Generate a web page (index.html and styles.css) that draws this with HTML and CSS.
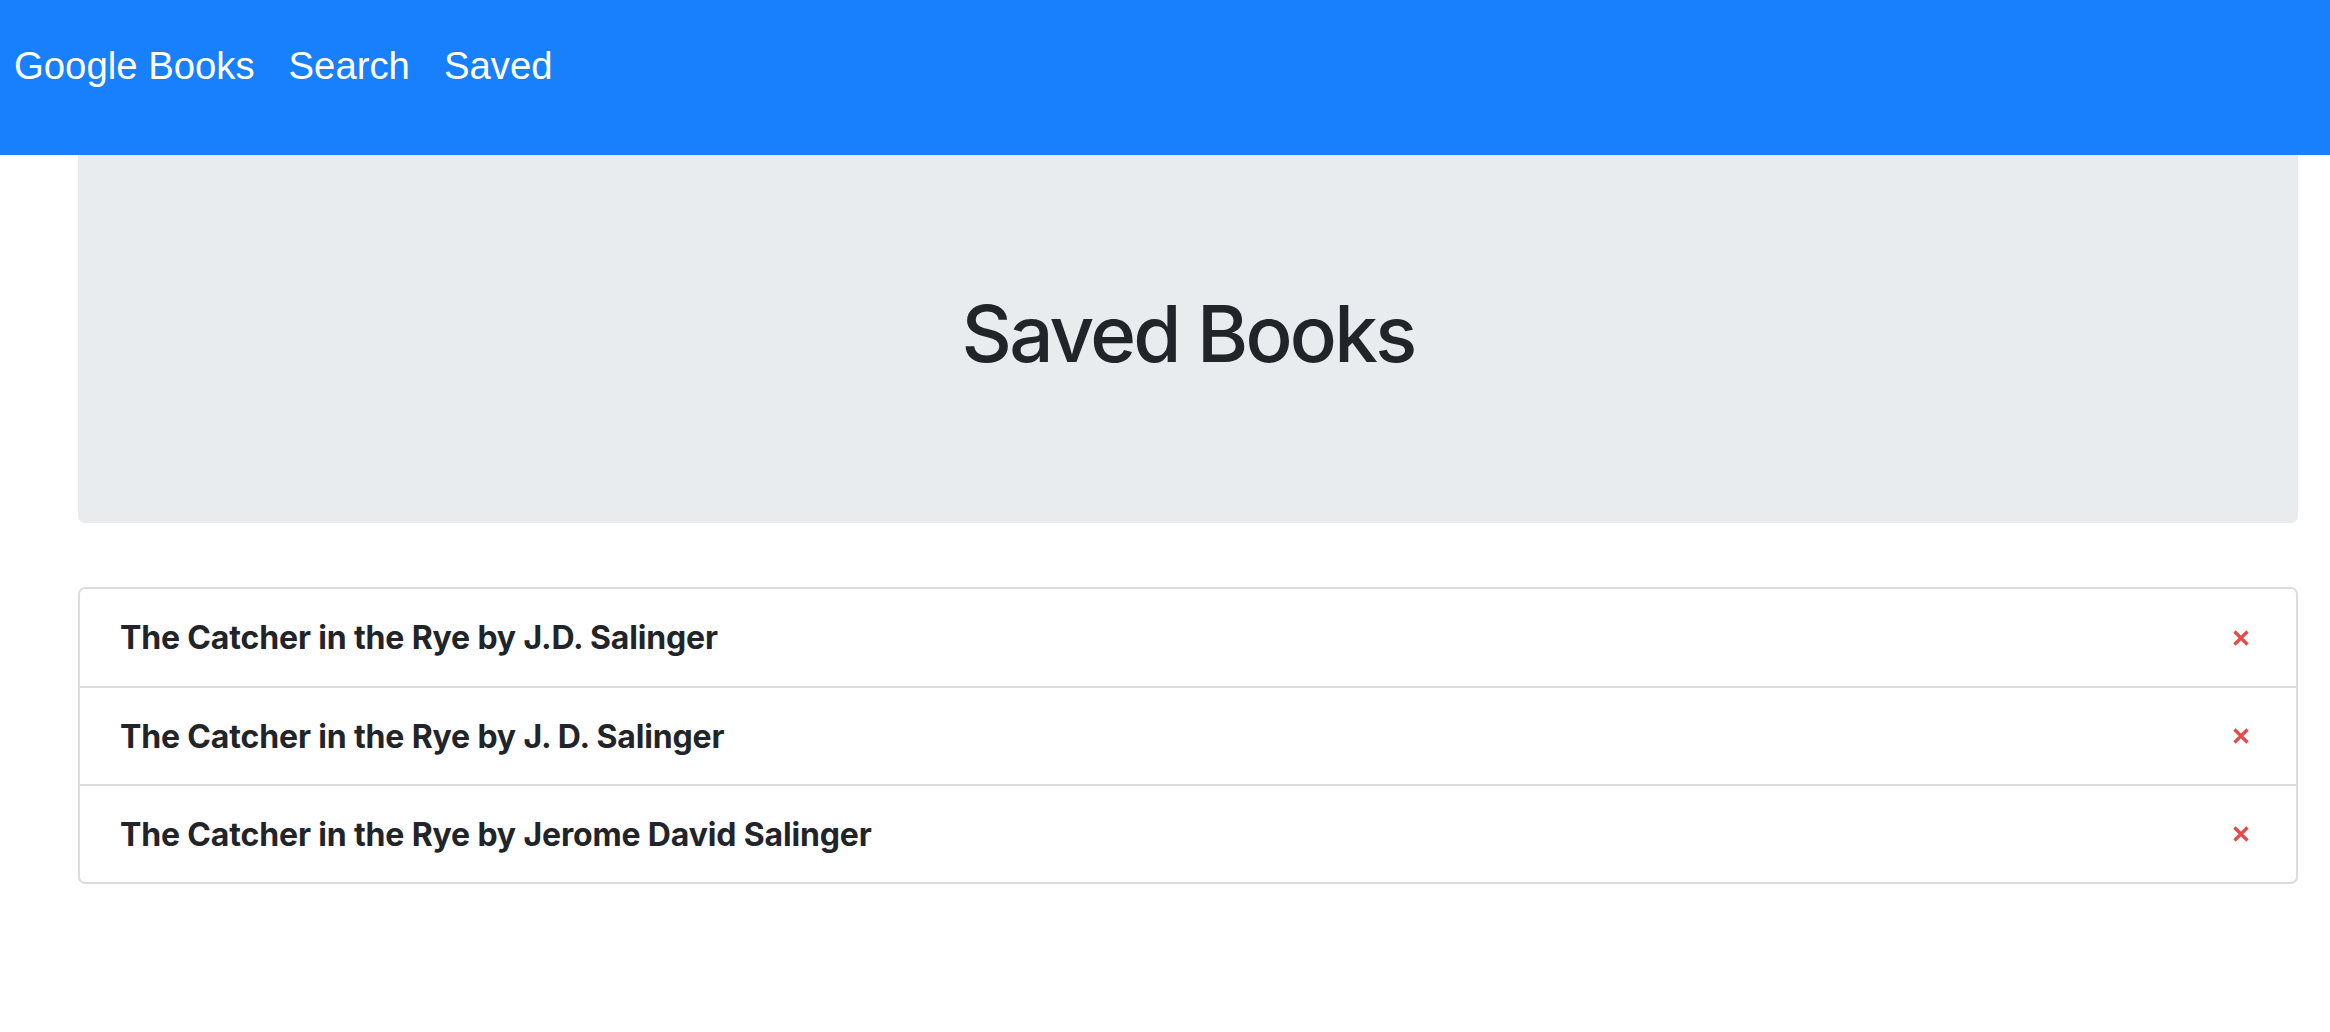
FILE: index.html
```html
<!DOCTYPE html>
<html lang="en">
<head>
<meta charset="utf-8">
<title>Google Books</title>
<link rel="stylesheet" href="styles.css">
</head>
<body>
<nav class="navbar">
  <a class="nav-link brand" href="#">Google Books</a>
  <a class="nav-link" href="#">Search</a>
  <a class="nav-link" href="#">Saved</a>
</nav>
<main class="container">
  <section class="jumbotron">
    <h1 class="title">Saved Books</h1>
  </section>
  <ul class="book-list">
    <li class="book-item">
      <span class="book-name">The Catcher in the Rye by J.D. Salinger</span>
      <button class="delete" aria-label="Delete"><svg viewBox="0 0 16 16" width="16" height="16"><path d="M1.5 1.5L14.5 14.5M14.5 1.5L1.5 14.5" stroke="#e84a4a" stroke-width="3.2"/></svg></button>
    </li>
    <li class="book-item">
      <span class="book-name">The Catcher in the Rye by J. D. Salinger</span>
      <button class="delete" aria-label="Delete"><svg viewBox="0 0 16 16" width="16" height="16"><path d="M1.5 1.5L14.5 14.5M14.5 1.5L1.5 14.5" stroke="#e84a4a" stroke-width="3.2"/></svg></button>
    </li>
    <li class="book-item">
      <span class="book-name">The Catcher in the Rye by Jerome David Salinger</span>
      <button class="delete" aria-label="Delete"><svg viewBox="0 0 16 16" width="16" height="16"><path d="M1.5 1.5L14.5 14.5M14.5 1.5L1.5 14.5" stroke="#e84a4a" stroke-width="3.2"/></svg></button>
    </li>
  </ul>
</main>
</body>
</html>
```
FILE: styles.css
```css
* { box-sizing: border-box; }
html, body { margin: 0; padding: 0; background: #fff; }
body { font-family: Inter, "Liberation Sans", sans-serif; color: #212529; }

.navbar {
  height: 155px;
  background: #1880fd;
  display: flex;
  align-items: center;
  gap: 34px;
  padding: 0 0 22px 14px;
}
.nav-link {
  font-family: "Liberation Sans", Arial, sans-serif;
  font-size: 38.3px;
  color: #fff;
  text-decoration: none;
  line-height: 1;
}

.container {
  padding: 0 32px 0 78px;
}
.jumbotron {
  height: 368px;
  background: #e8ecef;
  border-radius: 0 0 7px 7px;
  display: flex;
  align-items: center;
  justify-content: center;
  padding-bottom: 10px;
}
.title {
  margin: 0;
  font-size: 78px;
  font-weight: 500;
  letter-spacing: -2.7px;
  line-height: 1;
}

.book-list {
  list-style: none;
  margin: 64px 0 0;
  padding: 0;
  border: 2px solid #dcdcdc;
  border-radius: 7px;
}
.book-item {
  height: 98px;
  display: flex;
  align-items: center;
  justify-content: space-between;
  padding: 0 47px 0 40px;
  border-top: 2px solid #dcdcdc;
}
.book-item:first-child { border-top: 0; height: 97px; }
.book-name {
  font-size: 32px;
  font-weight: 700;
  letter-spacing: -0.15px;
}
.delete {
  border: 0;
  background: none;
  padding: 0;
  width: 16px;
  height: 16px;
  display: flex;
}
```
